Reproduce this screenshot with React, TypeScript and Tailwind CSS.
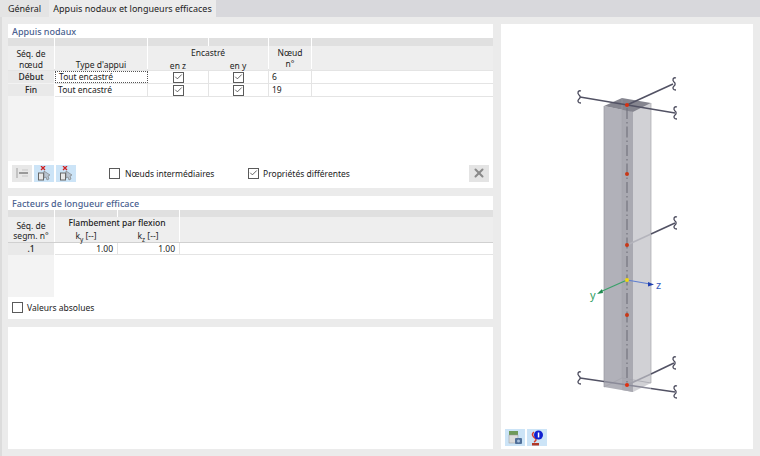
import { Check, X } from "lucide-react";

const font = "font-['Noto_Sans',sans-serif]";

function Box({ checked }: { checked?: boolean }) {
  return (
    <span className="flex h-[11px] w-[11px] shrink-0 items-center justify-center border border-[#5a5a5a] bg-white">
      {checked && <Check className="h-[10px] w-[10px] text-[#333]" strokeWidth={2} />}
    </span>
  );
}

function Squiggle({ x, y }: { x: number; y: number }) {
  return (
    <path
      d={`M${x + 2} ${y - 6} c-3 -1 -4 2 -2 4 c1.500 1 1.500 3 0 4 c-2 2 -1 4 2 4`}
      fill="none"
      stroke="#4a4a5c"
      strokeWidth="1.3"
    />
  );
}

function Column() {
  return (
    <svg width="252" height="425" viewBox="501 24 252 425" className="block">
      <polygon points="604,106 633,112 633,392 604,387" fill="#b1b1b9" />
      <polygon points="622,108 633,112 633,392 622,390" fill="#a9a9b1" />
      <polygon points="633,112 651,103 651,383 633,392" fill="#d1d1d5" />
      <polygon points="604,106 622,98 651,103 633,112" fill="#85858f" />
      <polyline points="604,387 622,378 651,383" fill="none" stroke="#a2a2aa" strokeWidth="0.7" />
      <line x1="622" y1="98" x2="622" y2="378" stroke="#a2a2aa" strokeWidth="0.5" />
      <line x1="604" y1="106" x2="604" y2="387" stroke="#9a9aa2" strokeWidth="0.7" />
      <line x1="651" y1="103" x2="651" y2="383" stroke="#a8a8ae" strokeWidth="0.7" />
      <line x1="627" y1="108" x2="627" y2="385" stroke="#70707a" strokeWidth="1.1" strokeDasharray="11 3 1.500 3" />

      <line x1="580" y1="97" x2="675" y2="113" stroke="#525264" strokeWidth="1.5" />
      <line x1="627" y1="105" x2="673" y2="84" stroke="#525264" strokeWidth="1.5" />
      <Squiggle x={579} y={97} />
      <Squiggle x={675} y={113} />
      <Squiggle x={674} y={84} />

      <line x1="627" y1="245" x2="651" y2="234" stroke="#b4b4bc" strokeWidth="1.5" />
      <line x1="651" y1="234" x2="675" y2="223" stroke="#525264" strokeWidth="1.5" />
      <Squiggle x={675} y={223} />

      <line x1="580" y1="378" x2="604" y2="381.500" stroke="#525264" strokeWidth="1.5" />
      <line x1="604" y1="381.500" x2="651" y2="388.500" stroke="#8a8a98" strokeWidth="1.5" />
      <line x1="651" y1="388.500" x2="675" y2="392" stroke="#525264" strokeWidth="1.5" />
      <line x1="627" y1="385" x2="651" y2="374" stroke="#a0a0aa" strokeWidth="1.5" />
      <line x1="651" y1="374" x2="674" y2="363" stroke="#525264" strokeWidth="1.5" />
      <Squiggle x={579} y={378} />
      <Squiggle x={675} y={392} />
      <Squiggle x={674} y={363} />

      <line x1="627" y1="280" x2="600" y2="292" stroke="#3aa06a" strokeWidth="1.2" />
      <polygon points="597,294 602,289 603,293" fill="#1f8a50" />
      <line x1="627" y1="280" x2="650" y2="284" stroke="#5f7fd0" strokeWidth="1.2" />
      <polygon points="654,284.500 648,282 648,286.500" fill="#2040b0" />

      <circle cx="627" cy="105" r="2" fill="#d83010" />
      <circle cx="627" cy="174" r="2" fill="#c83818" />
      <circle cx="627" cy="245" r="2" fill="#c83818" />
      <circle cx="627" cy="315" r="2" fill="#c83818" />
      <circle cx="627" cy="385" r="2" fill="#e03010" />
      <circle cx="627" cy="280" r="2" fill="#f0d810" />

      <text x="590" y="299" fontSize="11" fill="#2f9e62" fontFamily="Noto Sans, sans-serif">y</text>
      <text x="656" y="289" fontSize="11" fill="#3b5fc0" fontFamily="Noto Sans, sans-serif">z</text>
    </svg>
  );
}

function AlignIcon() {
  return (
    <svg width="16" height="12" viewBox="0 0 16 12">
      <line x1="3" y1="1" x2="3" y2="11" stroke="#b8b8b8" strokeWidth="1.5" />
      <line x1="5" y1="6" x2="14" y2="6" stroke="#808080" strokeWidth="1.5" />
      <line x1="8" y1="3" x2="14" y2="3" stroke="#c8c8c8" />
      <line x1="8" y1="9" x2="14" y2="9" stroke="#c8c8c8" />
    </svg>
  );
}

function NodeDeleteIcon() {
  return (
    <svg width="16" height="15" viewBox="0 0 16 15">
      <path d="M5 0l4 4M9 0L5 4" stroke="#d02020" strokeWidth="1.3" />
      <rect x="2.500" y="7" width="5" height="7" fill="#e8e8e8" stroke="#666" />
      <path d="M8 5l6 4-2 1 1 3-2 1-1-3-2 1z" fill="#b8c4d0" stroke="#777" strokeWidth="0.6" />
    </svg>
  );
}

function ViewIcon() {
  return (
    <svg width="16" height="16" viewBox="0 0 16 16">
      <rect x="2" y="1" width="9" height="4" fill="#6f9a5a" />
      <rect x="2" y="5" width="9" height="8" fill="#dcdcdc" stroke="#999" strokeWidth="0.5" />
      <rect x="8" y="8" width="7" height="6" rx="1" fill="#50709a" />
      <circle cx="11.500" cy="11" r="1.500" fill="#a8c0dc" />
    </svg>
  );
}

function InfoIcon() {
  return (
    <svg width="16" height="16" viewBox="0 0 16 16">
      <path d="M5 2c-3 2-1 5 1 6s1 3-1 4" fill="none" stroke="#d84030" strokeWidth="1.5" />
      <rect x="3" y="13" width="7" height="2.500" fill="#b03828" />
      <circle cx="9.500" cy="5" r="4.500" fill="#1020d0" />
      <rect x="8.800" y="2.500" width="1.500" height="5" fill="#fff" />
    </svg>
  );
}

export default function App() {
  return (
    <div className={`flex h-[456px] w-[760px] flex-col overflow-hidden bg-[#ebebeb] text-[8.5px] leading-[11px] text-[#222] ${font}`}>
      {/* tabs */}
      <div className="flex h-[17px] shrink-0 bg-[#d8d8dc] text-[9px]">
        <div className="flex w-[49px] items-center justify-center bg-[#e4e4e4]">Général</div>
        <div className="flex w-[167px] items-center justify-center whitespace-nowrap bg-[#ececec]">Appuis nodaux et longueurs efficaces</div>
      </div>

      <div className="flex flex-1 gap-2 border-l-2 border-[#dcdcdc] pb-[7px] pl-[6px] pr-[7px] pt-[7px]">
        <div className="flex w-[485px] flex-col gap-2">
          {/* Appuis nodaux */}
          <section className="flex h-[164px] flex-col bg-white">
            <h2 className="flex h-[14px] items-center pl-1 text-[9px] font-medium text-[#4a5f8f]">Appuis nodaux</h2>
            <div className="grid h-[8px] grid-cols-[46px_92px_60px_59px_42px_1fr] gap-x-px">
              {[0, 1, 2, 3, 4, 5].map((i) => (
                <div key={i} className="bg-[#e0e0e0]" />
              ))}
            </div>
            <div className="grid h-[25px] grid-cols-[46px_92px_120px_42px_1fr] gap-x-px border-b-2 border-[#e4e4e4] text-center">
              <div className="flex h-[24px] flex-col items-center justify-center bg-[#eeeeee] pt-px">
                <span>Séq. de</span>
                <span>nœud</span>
              </div>
              <div className="flex h-[24px] items-end justify-center bg-[#eeeeee]">Type d'appui</div>
              <div className="flex h-[24px] flex-col bg-[#eeeeee]">
                <span className="pt-px">Encastré</span>
                <div className="mt-[2px] grid grid-cols-2">
                  <span>en z</span>
                  <span>en y</span>
                </div>
              </div>
              <div className="flex h-[24px] flex-col items-center justify-center bg-[#eeeeee]">
                <span>Nœud</span>
                <span>n°</span>
              </div>
              <div className="h-[24px] bg-[#eeeeee]" />
            </div>
            <div className="flex flex-1">
              <div className="mr-px flex w-[46px] flex-col gap-px bg-[#f3f3f3]">
                <div className="h-[12px] bg-[#e9e9e9] text-center font-medium leading-[12px]">Début</div>
                <div className="h-[12px] bg-[#e9e9e9] text-center font-medium leading-[12px]">Fin</div>
              </div>
              <div className="flex flex-1 flex-col">
                {[
                  { type: "Tout encastré", node: "6" },
                  { type: "Tout encastré", node: "19" },
                ].map((row, i) => (
                  <div key={row.node} className="grid h-[13px] grid-cols-[93px_61px_60px_43px_1fr] border-b border-[#e4e4e4] leading-[12px]">
                    <div className={`pl-[3px] ${i === 0 ? "border border-dotted border-[#555] leading-[10px]" : "border-r border-[#e4e4e4]"}`}>{row.type}</div>
                    <div className="flex items-center justify-center border-r border-[#e4e4e4]"><Box checked /></div>
                    <div className="flex items-center justify-center border-r border-[#e4e4e4]"><Box checked /></div>
                    <div className="border-r border-[#e4e4e4] pl-[3px]">{row.node}</div>
                    <div />
                  </div>
                ))}
              </div>
            </div>
            <div className="flex h-[27px] items-center pb-[3px] pl-1 pr-1">
              <span className="flex h-[17px] w-5 items-center justify-center bg-[#e8e8e8]"><AlignIcon /></span>
              <span className="ml-[2px] flex h-[17px] w-5 items-center justify-center bg-[#cce4f7]"><NodeDeleteIcon /></span>
              <span className="ml-[2px] flex h-[17px] w-5 items-center justify-center bg-[#cce4f7]"><NodeDeleteIcon /></span>
              <div className="ml-[33px] flex w-[139px] items-center gap-[5px]"><Box /><span>Nœuds intermédiaires</span></div>
              <div className="flex items-center gap-[4px]"><Box checked /><span>Propriétés différentes</span></div>
              <span className="ml-auto flex h-[17px] w-5 items-center justify-center bg-[#e4e4e4]">
                <X className="h-[14px] w-[14px] text-[#8a8a8a]" strokeWidth={3.5} />
              </span>
            </div>
          </section>

          {/* Facteurs de longueur efficace */}
          <section className="flex h-[123px] flex-col bg-white">
            <h2 className="flex h-[14px] items-center pl-1 text-[9px] font-medium text-[#4a5f8f]">Facteurs de longueur efficace</h2>
            <div className="grid h-[7px] grid-cols-[46px_62px_61px_1fr] gap-x-px">
              {[0, 1, 2, 3].map((i) => (
                <div key={i} className="bg-[#e0e0e0]" />
              ))}
            </div>
            <div className="grid h-[26px] grid-cols-[46px_124px_1fr] gap-x-px border-b border-[#d0d0d0] text-center">
              <div className="flex h-[25px] flex-col items-center justify-center bg-[#eeeeee] pt-[2px] leading-[10px]">
                <span>Séq. de</span>
                <span>segm. n°</span>
              </div>
              <div className="flex h-[25px] flex-col bg-[#eeeeee]">
                <span className="font-medium">Flambement par flexion</span>
                <div className="mt-[2px] grid grid-cols-2">
                  <span>k<sub className="align-[-1px] text-[6.5px] leading-none">y</sub> [--]</span>
                  <span>k<sub className="align-[-1px] text-[6.5px] leading-none">z</sub> [--]</span>
                </div>
              </div>
              <div className="h-[25px] bg-[#eeeeee]" />
            </div>
            <div className="flex flex-1">
              <div className="mr-px w-[46px] bg-[#f3f3f3]">
                <div className="h-[12px] bg-[#e9e9e9] text-center font-medium">.1</div>
              </div>
              <div className="grid h-[12px] flex-1 grid-cols-[63px_62px_1fr] border-b border-[#e4e4e4]">
                <div className="border-r border-[#e4e4e4] pr-[4px] text-right">1.00</div>
                <div className="border-r border-[#e4e4e4] pr-[4px] text-right">1.00</div>
                <div />
              </div>
            </div>
            <div className="flex h-[22px] items-center gap-[4px] pb-[2px] pl-1"><Box /><span>Valeurs absolues</span></div>
          </section>

          <section className="flex-1 bg-white" />
        </div>

        {/* preview */}
        <aside className="relative w-[252px] bg-white">
          <Column />
          <div className="absolute bottom-[3px] left-[4px] flex gap-[2px]">
            <span className="flex h-[17px] w-5 items-center justify-center bg-[#cce4f7]"><ViewIcon /></span>
            <span className="flex h-[17px] w-5 items-center justify-center bg-[#cce4f7]"><InfoIcon /></span>
          </div>
        </aside>
      </div>
    </div>
  );
}
